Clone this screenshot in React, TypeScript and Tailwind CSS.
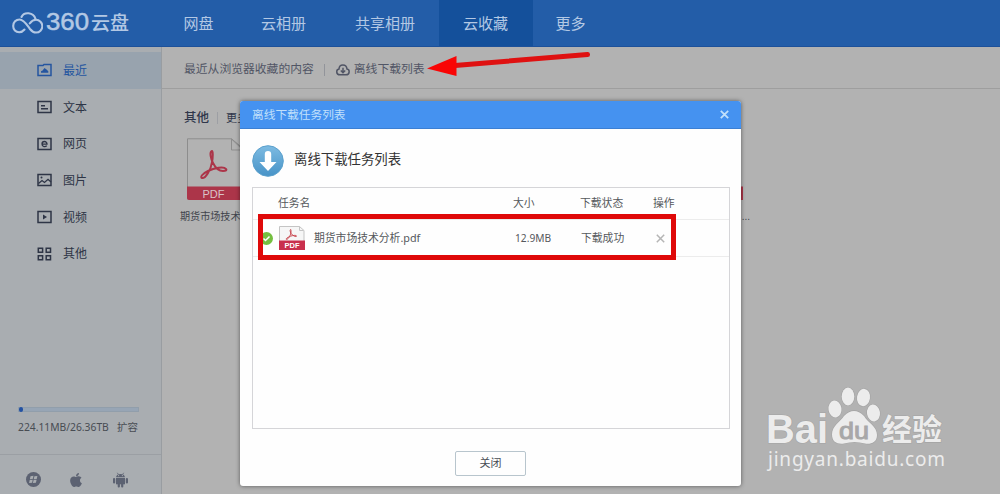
import type { ReactNode } from "react"
import { clsx } from "clsx"
import { FaApple } from "react-icons/fa"

type IconName = "recent" | "text" | "web" | "image" | "video" | "other"

const navItems = [
  { label: "网盘", box: "w-[74px]", active: false },
  { label: "云相册", box: "w-[96px]", active: false },
  { label: "共享相册", box: "w-[107px]", active: false },
  { label: "云收藏", box: "w-[94px]", active: true },
  { label: "更多", box: "w-[76px]", active: false },
]

const sideItems: { label: string; icon: IconName }[] = [
  { label: "最近", icon: "recent" },
  { label: "文本", icon: "text" },
  { label: "网页", icon: "web" },
  { label: "图片", icon: "image" },
  { label: "视频", icon: "video" },
  { label: "其他", icon: "other" },
]

const iconShapes: Record<IconName, ReactNode> = {
  recent: (
    <>
      <path d="M1 2.5h5l1-1h7v11H1z" />
      <path d="M4 9.8V8.2L5.6 7.4 7.5 5l2 1.4 1.8 1.8v1.6z" fill="currentColor" stroke="none" />
    </>
  ),
  text: (
    <>
      <path d="M1 1.5h13v11H1z" />
      <path d="M4 5.7h4M4 8.7h7" />
    </>
  ),
  web: (
    <>
      <path d="M1 1.5h13v11H1z" />
      <path d="M5 7.1h5C10 3.6 5 3.6 5 7.1c0 3.2 3.6 3 4.7 1.5" strokeWidth="1.3" />
    </>
  ),
  image: (
    <>
      <path d="M1 1.5h13v11H1z" />
      <path d="M1.5 10.5 5 7.5l2.5 2L11 6.3l3 2.8" strokeWidth="1.3" />
      <circle cx="4.5" cy="4.6" r="1" fill="currentColor" stroke="none" />
    </>
  ),
  video: (
    <>
      <path d="M1 1.5h13v11H1z" />
      <path d="M6 4.4 10 7 6 9.6z" fill="currentColor" stroke="none" />
    </>
  ),
  other: (
    <path d="M1.3 1.2h4.3v4H1.3zM9.2 1.2h4.3v4H9.2zM1.3 8.8h4.3v4H1.3zM9.2 8.8h4.3v4H9.2z" />
  ),
}

function SideIcon({ name }: { name: IconName }) {
  return (
    <svg width="15" height="14" viewBox="0 0 15 14" fill="none" stroke="currentColor" strokeWidth="1.5">
      {iconShapes[name]}
    </svg>
  )
}

function PdfIcon({ className }: { className?: string }) {
  return (
    <svg className={className} viewBox="0 0 62 62" fill="none">
      <path d="M.5 .8h44L58 12v49H.5z" fill="currentColor" stroke="#8d8d8d" />
      <path d="M44.5 1v11H56z" stroke="#8d8d8d" />
      <path d="M0 48.5h62V62H2q-2 0-2-2z" className="fill-[#ac3549]" />
      <path
        d="M25 13c-3 1-1 8 1 12 3 6 6 8 10 8 3 0 4-1 3-2-2-3-12-1-18 2-6 3-8 6-6 7 3 1 9-8 10-16 1-5 1-11 0-11z"
        className="stroke-[#ac3549]"
        strokeWidth="2"
      />
      <text
        x="26.500"
        y="59.500"
        textAnchor="middle"
        fontSize="11"
        className="fill-[#d9c4c8] font-['Liberation_Sans',sans-serif]"
      >
        PDF
      </text>
    </svg>
  )
}

function SmallPdfIcon() {
  return (
    <svg className="ml-[6px]" width="26" height="24" viewBox="0 0 26 24" fill="none">
      <path d="M.5.5h20l4.500 4V23H.5z" fill="#f6f6f6" stroke="#c4c4c4" />
      <path d="M20.500.5v4h4" stroke="#c4c4c4" />
      <path
        d="M11.500 3.500c-1 1 0 4 2 5.500s4 2 4 1-4-.8-7 .6-4 2.600-3 2.800c2 0 4.500-5 4.500-7.500 0-1.500 0-2.600-.5-2.400z"
        stroke="#c9474f"
      />
      <path d="M0 14.500h26V24H0z" fill="#c92f4d" />
      <text
        x="13"
        y="22.300"
        textAnchor="middle"
        fontSize="7.500"
        fontWeight="700"
        fill="#fff"
        className="font-['Liberation_Sans',sans-serif]"
      >
        PDF
      </text>
    </svg>
  )
}

function AndroidIcon() {
  return (
    <svg className="mt-2.5 ml-[29px]" width="15" height="16" viewBox="0 0 15 16" fill="currentColor">
      <path d="M3 5.300C3.200 .8 11.800.8 12 5.300z" />
      <path d="M4.300.8 5.400 2.500M10.700.8 9.600 2.500" stroke="currentColor" strokeWidth=".8" />
      <circle cx="5.600" cy="3.600" r=".6" fill="#a9adb1" />
      <circle cx="9.400" cy="3.600" r=".6" fill="#a9adb1" />
      <path d="M3 6h9v6.300H3z" />
      <rect x="0" y="6" width="2.200" height="5.500" rx="1.100" />
      <rect x="12.800" y="6" width="2.200" height="5.500" rx="1.100" />
      <rect x="4.700" y="11" width="2.200" height="4.500" rx="1" />
      <rect x="8.100" y="11" width="2.200" height="4.500" rx="1" />
    </svg>
  )
}

function Header() {
  return (
    <header className="flex h-[47px] shrink-0 border-b border-[#1d519a] bg-[#235da8] text-[#b3c8e4]">
      <div className="flex w-[162px] items-center pl-3">
        <svg width="31" height="23" viewBox="0 0 31 23" fill="none" stroke="currentColor" strokeWidth="2.1" strokeLinecap="round">
          <path d="M12.500 17.500C11 19.300 9.300 20.300 7.200 20.300 3.700 20.300 1.200 17.800 1.200 14S4 7.500 7.500 7.500C12 7.500 15 13 18 17c2 2.500 3.500 3.500 6 3.500a6.300 6.300 0 0 0 0-12.700c-2.800 0-4.700 1.600-6.200 3.600" />
          <path d="M9.500 5C12-.5 21.500 0 23.500 7" />
        </svg>
        <svg width="89" height="28" viewBox="0 0 89 28" fill="currentColor">
          <text
            x="3"
            y="21"
            fontSize="23"
            textLength="43"
            lengthAdjust="spacingAndGlyphs"
            stroke="currentColor"
            strokeWidth=".5"
            className="font-['Liberation_Sans',sans-serif]"
          >
            360
          </text>
          <text x="48" y="20.500" fontSize="19" className="font-['Noto_Sans_CJK_SC',sans-serif] font-medium">
            云盘
          </text>
        </svg>
      </div>
      <nav className="flex text-[15px]">
        {navItems.map((item) => (
          <div
            key={item.label}
            className={clsx("flex items-center justify-center pr-px", item.box, item.active && "bg-[#14509b]")}
          >
            {item.label}
          </div>
        ))}
      </nav>
    </header>
  )
}

function Sidebar() {
  return (
    <aside className="flex w-[162px] shrink-0 flex-col border-r border-[#999da1] bg-[#a9adb1] pt-[5px] text-[#2e3546]">
      {sideItems.map((item, i) => (
        <div
          key={item.label}
          className={clsx(
            "flex h-[36.7px] items-center gap-[11px] pl-[37px] text-[12px]",
            i === 0 && "bg-[#98a3ae] text-[#2455a0]"
          )}
        >
          <SideIcon name={item.icon} />
          <span className="pt-px">{item.label}</span>
        </div>
      ))}
      <div className="mt-auto px-[18px]">
        <div className="h-[5px] w-[121px] border border-[#919eab] bg-[#97a5b5]">
          <div className="-mt-px h-[5px] w-1 rounded-full bg-[#2351a2]" />
        </div>
        <div className="mt-[5px] flex h-5 items-center text-[10.5px] text-[#484c53]">
          <span className="w-[99px] font-['Noto_Sans',sans-serif] text-[10.3px] whitespace-nowrap">
            224.11MB/26.36TB
          </span>
          <span className="whitespace-nowrap">扩容</span>
        </div>
      </div>
      <div className="mt-[17px] flex h-[40px] items-center border-t border-[#9b9fa4] pl-[26px] text-[#5c6272]">
        <svg className="mt-2.5" width="15" height="15" viewBox="0 0 15 15">
          <circle cx="7.500" cy="7.500" r="7.500" fill="currentColor" />
          <path
            d="m4.500 4.300 3-.5-.6 3-3 .4zM8.400 4.300l3-.3-.7 3-3 .2zM3.700 8l3-.3-.6 3-3 .2zM7.600 8l3-.2-.7 3-3 .2z"
            fill="#a9adb1"
          />
        </svg>
        <FaApple className="mt-2.5 ml-[27px] size-4" />
        <AndroidIcon />
      </div>
    </aside>
  )
}

function Content() {
  return (
    <main className="flex min-w-0 flex-1 flex-col bg-[#b2b2b2] text-[#515565]">
      <div className="flex h-[42px] shrink-0 items-center border-b border-[#9e9e9e] pt-1 pl-[22px] text-[11.8px]">
        <span>最近从浏览器收藏的内容</span>
        <span className="ml-[10px] h-3 w-px bg-[#92949a]" />
        <svg className="mr-1 ml-[11px]" width="14" height="12" viewBox="0 0 14 12" fill="none" stroke="currentColor" strokeWidth="1.500">
          <path d="M4 10.800C-.3 10.800 0 5.500 3 5c.2-5.500 7.500-5.500 8 0 3 .5 3 5.800-1 5.800z" />
          <path d="M7 3.800v4.500M4.800 6.500 7 8.700l2.200-2.200" />
        </svg>
        <span>离线下载列表</span>
      </div>
      <div className="mt-[19px] flex h-5 items-center pl-[22px] text-[#30374b]">
        <span className="text-[12.500px] font-medium">其他</span>
        <span className="mx-[8px] h-3 w-px bg-[#9d9fa4]" />
        <span className="text-[11px]">更多</span>
      </div>
      <div className="mt-[10px] flex pl-[18px]">
        <div className="w-[503px]">
          <PdfIcon className="ml-[7px] size-[62px] text-[#b2b2b2]" />
          <p className="mt-3 text-[10.100px] text-[#41444c]">期货市场技术分析</p>
        </div>
        <div className="w-[67px]">
          <PdfIcon className="-ml-[2px] size-[62px] text-[#b2b2b2]" />
          <p className="mt-3 text-right text-[10px] text-[#41444c]">...</p>
        </div>
      </div>
    </main>
  )
}

function Dialog() {
  const columns = "grid grid-cols-[60px_198px_68px_73px_1fr] items-center text-[10.8px]"

  return (
    <section className="absolute top-[101px] left-[240px] flex h-[385px] w-[501px] flex-col overflow-hidden rounded-[3px] bg-[#fefefe] shadow-[0_0_4px_rgba(0,0,0,0.5)]">
      <div className="flex h-7 shrink-0 items-center justify-between border-b border-[#3b7fd3] bg-[#4592f0] px-3 text-[11.7px] text-[#c1e0fb]">
        <span>离线下载任务列表</span>
        <svg width="9" height="9" viewBox="0 0 9 9" stroke="currentColor" strokeWidth="1.800">
          <path d="m.8.8 7.400 7.400M8.200.8.8 8.200" />
        </svg>
      </div>
      <div className="flex h-[58px] shrink-0 items-center pt-1.5 pl-3">
        <svg width="32" height="32" viewBox="0 0 32 32">
          <defs>
            <linearGradient id="disc" x1="0" y1="0" x2="0" y2="1">
              <stop offset="0" stopColor="#7dbbe2" />
              <stop offset="1" stopColor="#4793c7" />
            </linearGradient>
          </defs>
          <circle cx="16" cy="16" r="15.300" fill="url(#disc)" stroke="#5ba0cc" />
          <path d="M12.800 9q0-3 3.200-3t3.200 3v8h5.300L16 26 7.500 17h5.300z" fill="#fff" />
        </svg>
        <h1 className="ml-[10px] pb-[3px] text-[13.400px] text-[#333]">离线下载任务列表</h1>
      </div>
      <div className="ml-3 h-[242px] w-[477.500px] shrink-0 border border-[#d5d5d8] text-[#55585c]">
        <div className={clsx(columns, "h-8 border-b border-[#ececec]")}>
          <span className="col-span-2 pl-[25px]">任务名</span>
          <span className="pl-[2px]">大小</span>
          <span className="pl-px">下载状态</span>
          <span className="pl-px">操作</span>
        </div>
        <div className={clsx(columns, "h-[37px] border-b border-[#ececec]")}>
          <div className="flex items-center pl-[7px]">
            <svg width="13" height="13" viewBox="0 0 13 13">
              <circle cx="6.500" cy="6.500" r="6.500" fill="#74bf40" />
              <path d="m3.500 6.500 2 2 4-4" fill="none" stroke="#fff" strokeWidth="1.500" />
            </svg>
            <SmallPdfIcon />
          </div>
          <span className="pl-px">
            期货市场技术分析<span className="font-['Noto_Sans',sans-serif]">.pdf</span>
          </span>
          <span className="pl-[4px] font-['Noto_Sans',sans-serif] text-[10.200px]">12.9MB</span>
          <span className="pl-[2px]">下载成功</span>
          <svg className="ml-[4px]" width="9" height="9" viewBox="0 0 9 9" stroke="#b5b5b5" strokeWidth="1.500">
            <path d="m.8.8 7.400 7.400M8.200.8.8 8.200" />
          </svg>
        </div>
      </div>
      <div className="flex flex-1 items-center justify-center pt-3">
        <button className="h-[25px] w-[71px] rounded-[2px] border border-[#b8c5cd] text-[11px] text-[#474d55]">
          关闭
        </button>
      </div>
    </section>
  )
}

function Watermark() {
  return (
    <svg
      className="absolute top-[380px] left-[760px]"
      width="200"
      height="100"
      viewBox="0 0 200 100"
      fill="#ececec"
    >
      <g stroke="#a4a4a4" strokeWidth="1.200" paintOrder="stroke">
        <text
          x="6"
          y="62.500"
          fontSize="40"
          fontWeight="700"
          textLength="62"
          lengthAdjust="spacingAndGlyphs"
          className="font-['Liberation_Sans',sans-serif]"
        >
          Bai
        </text>
        <ellipse cx="75" cy="29" rx="6.500" ry="8.500" transform="rotate(-8 75 29)" />
        <ellipse cx="88" cy="16.500" rx="6.300" ry="9" />
        <ellipse cx="103.500" cy="17.500" rx="6.500" ry="8.700" transform="rotate(8 103.500 17.500)" />
        <ellipse cx="113.500" cy="33" rx="6.500" ry="8.500" transform="rotate(-8 113.500 33)" />
        <path d="M84 36q10-10 20 0c4 7 13 10 13 19 0 8-7 9.500-12 8.500-7-2-14-2-21 0-6 1-12-1-12-9 0-9 8-12 12-18.500z" />
        <text
          x="122"
          y="60"
          fontSize="30"
          fontWeight="700"
          textLength="60"
          className="font-['Noto_Sans_CJK_SC',sans-serif]"
        >
          经验
        </text>
      </g>
      <text
        x="79"
        y="58.500"
        fontSize="24"
        fill="#a8a8a8"
        stroke="#a8a8a8"
        strokeWidth="1"
        textLength="30"
        lengthAdjust="spacingAndGlyphs"
        className="font-['Liberation_Sans',sans-serif]"
      >
        du
      </text>
      <text x="8" y="86" fontSize="19" textLength="177" className="font-['Noto_Sans',sans-serif]">
        jingyan.baidu.com
      </text>
    </svg>
  )
}

export default function App() {
  return (
    <div className="relative flex h-[494px] w-[1000px] flex-col overflow-hidden font-['Liberation_Sans','Noto_Sans_CJK_SC',sans-serif] leading-none">
      <Header />
      <div className="flex min-h-0 flex-1">
        <Sidebar />
        <Content />
      </div>
      <Dialog />
      <Watermark />
      {/* annotations: highlighted row and pointer to the toolbar link */}
      <div className="absolute top-[214px] left-[258px] h-[46px] w-[418px] border-5 border-[#df0909]" />
      <svg className="absolute top-[45px] left-[420px]" width="175" height="40" viewBox="0 0 175 40">
        <path d="M35 20.500 167.500 9.500" stroke="#df1111" strokeWidth="5" strokeLinecap="round" />
        <path d="M7 23.500 36.500 11v20z" fill="#f90505" />
      </svg>
    </div>
  )
}
